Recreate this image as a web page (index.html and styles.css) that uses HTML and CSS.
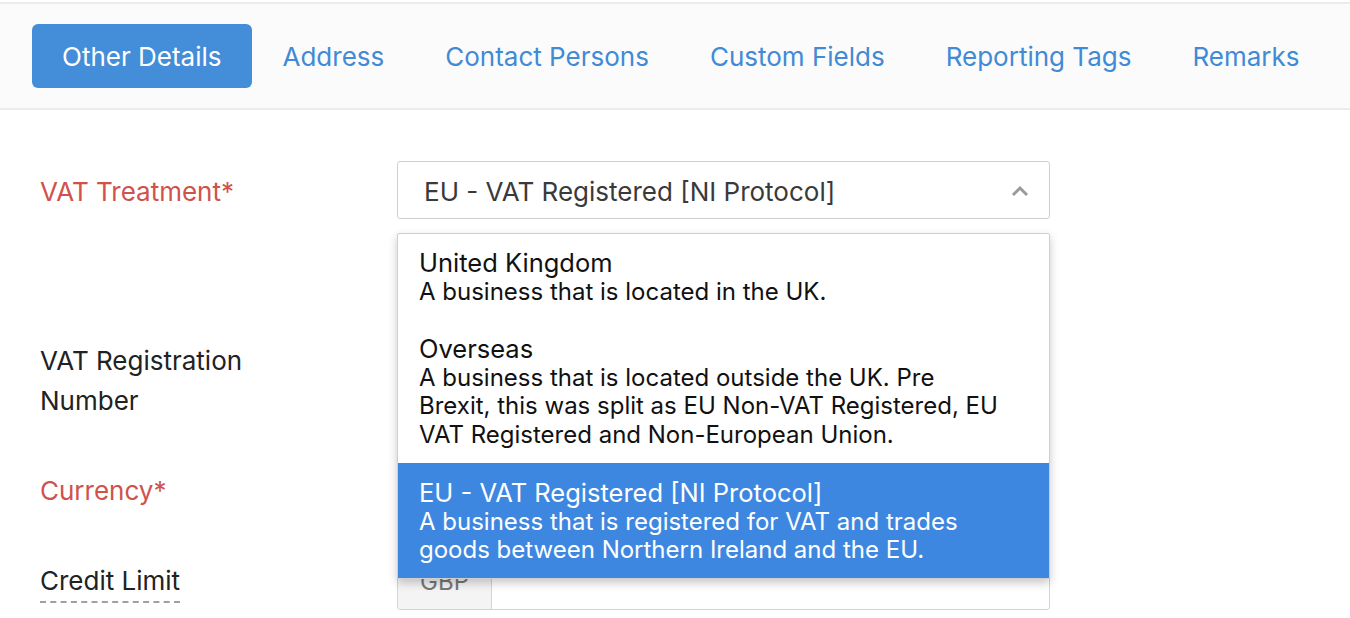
FILE: index.html
```html
<!DOCTYPE html>
<html>
<head>
<meta charset="utf-8">
<link rel="stylesheet" href="styles.css">
</head>
<body>
<div class="tabs">
  <a class="tab active">Other Details</a>
  <a class="tab">Address</a>
  <a class="tab">Contact Persons</a>
  <a class="tab">Custom Fields</a>
  <a class="tab">Reporting Tags</a>
  <a class="tab">Remarks</a>
</div>
<div class="form">
  <div class="row row-vat">
    <label class="label required">VAT Treatment*</label>
    <div class="field">
      <div class="select">
        <span>EU - VAT Registered [NI Protocol]</span>
        <svg class="chev" width="18" height="12" viewBox="0 0 18 12"><path d="M2 10 L9 3 L16 10" fill="none" stroke="#9a9a9a" stroke-width="3"/></svg>
      </div>
      <ul class="menu">
        <li class="opt">
          <div class="opt-title">United Kingdom</div>
          <div class="opt-desc">A business that is located in the UK.</div>
        </li>
        <li class="opt">
          <div class="opt-title">Overseas</div>
          <div class="opt-desc">A business that is located outside the UK. Pre Brexit, this was split as EU Non-VAT Registered, EU VAT Registered and Non-European Union.</div>
        </li>
        <li class="opt selected">
          <div class="opt-title">EU - VAT Registered [NI Protocol]</div>
          <div class="opt-desc">A business that is registered for VAT and trades goods between Northern Ireland and the EU.</div>
        </li>
      </ul>
    </div>
  </div>
  <div class="row row-reg">
    <label class="label"><span class="wrap">VAT Registration Number</span></label>
    <div class="field"><div class="input"></div></div>
  </div>
  <div class="row row-cur">
    <label class="label required">Currency*</label>
    <div class="field"><div class="input"></div></div>
  </div>
  <div class="row row-credit">
    <label class="label"><span class="dashed">Credit Limit</span></label>
    <div class="field">
      <div class="input group"><span class="prefix">GBP</span><span class="rest"></span></div>
    </div>
  </div>
</div>
</body>
</html>
```
FILE: styles.css
```css
html, body {
  margin: 0;
  padding: 0;
  background: #fff;
  font-family: Inter, "Noto Sans", sans-serif;
  color: #212529;
  overflow: hidden;
}
.tabs {
  margin-top: 2px;
  background: #fbfbfb;
  border-top: 2px solid #ececec;
  border-bottom: 2px solid #ececec;
  display: flex;
  align-items: center;
  gap: 1px;
  padding-left: 32px;
  box-sizing: border-box;
  height: 108px;
}
.tab {
  font-size: 26px;
  color: #408ad6;
  padding: 2px 30px 0;
  height: 62px;
  line-height: 62px;
  border-radius: 6px;
  white-space: nowrap;
}
.tab.active {
  background: #438dd9;
  color: #fff;
}
.form {
  padding: 51px 0 0 40px;
}
.row {
  display: flex;
  align-items: flex-start;
}
.label {
  width: 357px;
  flex: none;
  font-size: 26px;
  line-height: 40px;
  color: #222;
}
.wrap {
  display: block;
  width: 260px;
}
.label.required { color: #d0524b; }
.row-vat .label { padding-top: 11px; }
.field {
  position: relative;
  width: 653px;
}
.select {
  height: 58px;
  box-sizing: border-box;
  border: 1px solid #cfcfcf;
  border-radius: 3px;
  display: flex;
  align-items: center;
  justify-content: space-between;
  padding: 2px 20px 0 26px;
  font-size: 26px;
  color: #3a3a3a;
}
.chev { margin-top: 0; }
.menu {
  position: absolute;
  top: 72px;
  left: 0;
  right: 0;
  margin: 0;
  padding: 0;
  list-style: none;
  background: #fff;
  border: 1px solid #cfcfcf;
  border-radius: 2px;
  box-shadow: 0 4px 10px rgba(0,0,0,0.22);
  z-index: 5;
}
.opt {
  padding: 15px 50px 14px 21px;
  line-height: 28.5px;
  color: #111;
}
.opt-title { font-size: 25.5px; }
.opt-desc { font-size: 24px; }
.opt.selected {
  background: #3e87e0;
  color: #fff;
  padding-top: 16px;
  padding-bottom: 13px;
}
.input {
  height: 58px;
  box-sizing: border-box;
  border: 1px solid #d4d4d4;
  border-radius: 3px;
}
.row-reg { margin-top: 122px; }
.row-cur { margin-top: 40px; }
.row-cur .label { padding-top: 10px; }
.row-credit { margin-top: 33px; }
.row-credit .label { padding-top: 9px; }
.dashed {
  border-bottom: 2px dashed #a0a0a0;
  padding-bottom: 5px;
}
.group {
  display: flex;
  overflow: hidden;
}
.prefix {
  width: 93px;
  background: #f4f4f4;
  border-right: 1px solid #d4d4d4;
  font-size: 24px;
  color: #777;
  display: flex;
  align-items: center;
  justify-content: center;
}
```
